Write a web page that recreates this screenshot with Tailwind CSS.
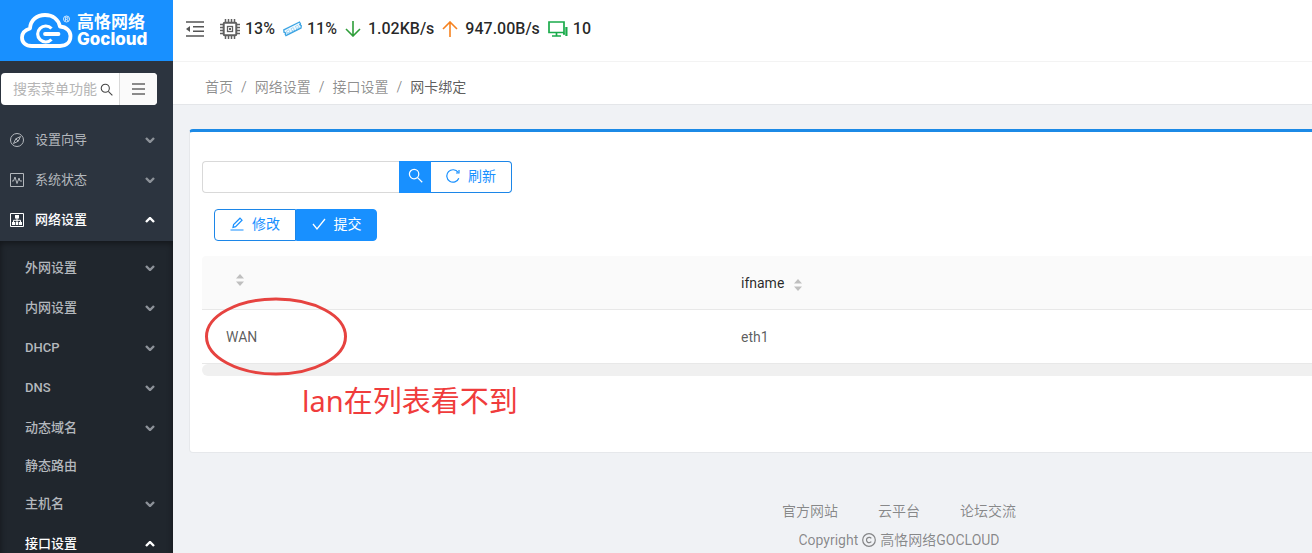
<!DOCTYPE html>
<html lang="zh-CN">
<head>
    <meta charset="UTF-8">
    <meta name="viewport" content="width=device-width, initial-scale=1.0">
    <title>网卡绑定 - 高恪网络</title>
    <script src="https://cdn.jsdelivr.net/npm/@tailwindcss/browser@4"></script>
</head>
<body class="h-screen overflow-hidden bg-[#f0f2f5] font-[Roboto,'Noto_Sans_CJK_SC',sans-serif] text-sm text-black/65">
    <!-- Shared icons -->
    <svg class="hidden">
        <symbol id="chevron" viewBox="0 0 10 6"><path d="M1 1l4 4 4-4" fill="none" stroke="currentColor" stroke-width="2.400"/></symbol>
        <symbol id="search" viewBox="0 0 16 16"><circle cx="6.5" cy="6.5" r="5" fill="none" stroke="currentColor" stroke-width="1.3"/><path d="M10.2 10.2l5 5" stroke="currentColor" stroke-width="1.3"/></symbol>
        <symbol id="sorter" viewBox="0 0 8 12"><path d="M4 0l4 4.500H0zM4 12l4-4.500H0z" fill="currentColor"/></symbol>
    </svg>

    <div class="flex h-full">
        <!-- Sidebar -->
        <aside class="relative z-10 flex w-[173px] shrink-0 flex-col overflow-hidden bg-[#2c343f] text-[13px] text-[#b4b8bd]">
            <a href="#" class="flex h-[61px] shrink-0 items-center gap-1 bg-[#1890ff] pl-5 text-white">
                <svg class="h-9 w-[53px]" viewBox="0 0 53 36" fill="none" stroke="currentColor">
                    <path d="M12 33C5.500 33 2 29.500 2 24.500c0-4.500 3-7.500 8-9C10.500 7 17 2 25 2c8 0 13.500 4.500 15 11.500 6.500.5 10.500 4.500 10.500 9.500 0 6-4 10-10.500 10z" stroke-width="3.800" stroke-linejoin="round"/>
                    <path d="M31.500 15.500a8 8 0 1 0 0 11" stroke-width="3.200"/>
                    <path d="M25 21h13.500" stroke-width="3.800" stroke-linecap="round"/>
                    <circle cx="46.500" cy="6" r="3" stroke-width=".8"/>
                    <path d="M45.500 8V4.300h1.300a1 1 0 0 1 0 2h-1.300M47 6.300l.9 1.700" stroke-width=".7"/>
                </svg>
                <span class="flex flex-col">
                    <span class="text-[17px] leading-[17px] font-bold">高恪网络</span>
                    <span class="font-[Inter,sans-serif] text-[17px] leading-[17px] font-extrabold">Gocloud</span>
                </span>
            </a>

            <form class="mx-px mt-3 flex h-8 w-[156px] shrink-0 overflow-hidden rounded-sm bg-white text-[#444]">
                <label class="flex flex-1 items-center pl-3">
                    <input type="text" aria-label="搜索菜单功能" placeholder="搜索菜单功能" class="w-[87px] text-sm outline-none placeholder:text-[#b5b5b5]">
                    <svg class="h-[13px] w-[13px]"><use href="#search"/></svg>
                </label>
                <button type="button" aria-label="菜单" class="flex w-[38px] items-center justify-center border-l border-[#d9d9d9] bg-[#fafafa]">
                    <svg class="h-3 w-[13px]" viewBox="0 0 13 12" stroke="#666" stroke-width="1.300"><path d="M0 1h13M0 6h13M0 11h13"/></svg>
                </button>
            </form>

            <nav class="mt-[15px] flex flex-col pb-px">
                <a href="#" class="flex h-10 items-center gap-[11px] pr-[18px] pl-[10px]">
                    <svg class="h-[14px] w-[14px]" viewBox="0 0 14 14" fill="none" stroke="currentColor"><circle cx="7" cy="7" r="6.500"/><path d="M10.500 3.500L8.200 8.200 3.500 10.500 5.800 5.800zM5.800 5.800l2.400 2.400"/></svg>
                    <span class="flex-1">设置向导</span>
                    <svg class="h-[6px] w-[10px] text-[#8d9299]"><use href="#chevron"/></svg>
                </a>
                <a href="#" class="flex h-10 items-center gap-[11px] pr-[18px] pl-[10px]">
                    <svg class="h-[14px] w-[14px]" viewBox="0 0 14 14" fill="none" stroke="currentColor"><path d="M.5.5h13v13H.5z"/><path d="M2 8h1.500l1.500-4 2 6.500L9 5l1 3h2"/></svg>
                    <span class="flex-1">系统状态</span>
                    <svg class="h-[6px] w-[10px] text-[#8d9299]"><use href="#chevron"/></svg>
                </a>
                <a href="#" class="flex h-10 items-center gap-[11px] pr-[18px] pl-[10px] font-medium text-white">
                    <svg class="h-[14px] w-[14px]" viewBox="0 0 14 14" fill="none" stroke="currentColor"><path d="M.5.5h13v13H.5z"/><path d="M5 2h4v3.500H5zM2 9h3v3H2zM5.700 9h2.600v3H5.700zM9 9h3v3H9z" fill="currentColor" stroke="none"/><path d="M7 5v4M3.500 9V7.300h7V9"/></svg>
                    <span class="flex-1">网络设置</span>
                    <svg class="h-[6px] w-[10px] rotate-180"><use href="#chevron"/></svg>
                </a>
            </nav>

            <!-- Submenu -->
            <nav class="flex flex-1 flex-col bg-[#20262d] pt-[7px] font-medium shadow-[inset_0_2px_6px_rgba(0,0,0,0.45)] [&>a]:shrink-0">
                <a href="#" class="flex h-10 items-center justify-between pr-[18px] pl-[25px]">外网设置<svg class="h-[6px] w-[10px] text-[#8d9299]"><use href="#chevron"/></svg></a>
                <a href="#" class="flex h-10 items-center justify-between pr-[18px] pl-[25px]">内网设置<svg class="h-[6px] w-[10px] text-[#8d9299]"><use href="#chevron"/></svg></a>
                <a href="#" class="flex h-10 items-center justify-between pr-[18px] pl-[25px]">DHCP<svg class="h-[6px] w-[10px] text-[#8d9299]"><use href="#chevron"/></svg></a>
                <a href="#" class="flex h-10 items-center justify-between pr-[18px] pl-[25px]">DNS<svg class="h-[6px] w-[10px] text-[#8d9299]"><use href="#chevron"/></svg></a>
                <a href="#" class="flex h-10 items-center justify-between pr-[18px] pl-[25px]">动态域名<svg class="h-[6px] w-[10px] text-[#8d9299]"><use href="#chevron"/></svg></a>
                <a href="#" class="flex h-9 items-center pl-[25px]">静态路由</a>
                <a href="#" class="flex h-10 items-center justify-between pr-[18px] pl-[25px]">主机名<svg class="h-[6px] w-[10px] text-[#8d9299]"><use href="#chevron"/></svg></a>
                <a href="#" class="flex h-10 items-center justify-between pr-[18px] pl-[25px] text-white">接口设置<svg class="h-[6px] w-[10px] rotate-180"><use href="#chevron"/></svg></a>
            </nav>
        </aside>

        <!-- Content, wider than small windows -->
        <div class="min-w-0 flex-1 overflow-hidden">
            <div class="min-w-[1452px]">
                <header class="flex h-[61px] items-center bg-white pb-[3px] pl-[13px] text-base font-medium text-black/85">
                    <button type="button" aria-label="收起菜单" class="mr-4">
                        <svg class="h-[18px] w-[18px]" viewBox="0 0 18 18" stroke="#555" stroke-width="1.600"><path d="M0 2h18M7 6.700h11M7 11.300h11M0 16h18"/><path d="M4 6v6L0 9z" fill="#555" stroke="none"/></svg>
                    </button>
                    <div class="flex items-center gap-2">
                        <span class="flex items-center gap-[5px]">
                            <svg class="h-5 w-5" viewBox="0 0 20 20" fill="none" stroke="#606060"><rect x="3.700" y="3.700" width="12.600" height="12.600" rx="1" stroke-width="2"/><rect x="7.500" y="7.500" width="5" height="5" stroke-width="1.300"/><path d="M9 10h2" stroke-width="2"/><path d="M5.500 0v3M8.500 0v3M11.500 0v3M14.500 0v3M5.500 17v3M8.500 17v3M11.500 17v3M14.500 17v3M0 5.500h3M0 8.500h3M0 11.500h3M0 14.500h3M17 5.500h3M17 8.500h3M17 11.500h3M17 14.500h3" stroke-width="1.500"/></svg>
                            13%
                        </span>
                        <span class="flex items-center gap-[5px]">
                            <svg class="h-5 w-[19px]" viewBox="0 0 19 20" fill="none" stroke="#3aa3e3"><path d="M.8 10.800L16.500 3l1 1.800-.7.8 1.500 1.200-.3 2.200L3 16.700l-.8-1.500.5-1.200-1.700-.8z" fill="#eef8fe" stroke-width="1.300"/><path d="M3.500 12l2.300-1.200 1 2-2.300 1.200zM8 9.800l2.200-1.200 1 2L9 11.800zM12.500 7.500l2.200-1.200 1 2-2.200 1.200z" fill="#fff" stroke-width=".4"/><path d="M4 15.300l13-6.600" stroke-width=".8" stroke-dasharray="1 1"/></svg>
                            11%
                        </span>
                        <span class="flex items-center gap-[7px]">
                            <svg class="h-4 w-4" viewBox="0 0 16 16" fill="none" stroke="#2f9e3a" stroke-width="1.600"><path d="M8 0v15M1 8l7 7 7-7"/></svg>
                            1.02KB/s
                        </span>
                        <span class="flex items-center gap-[7px]">
                            <svg class="h-4 w-4" viewBox="0 0 16 16" fill="none" stroke="#f58220" stroke-width="1.600"><path d="M8 16V1M1 8l7-7 7 7"/></svg>
                            947.00B/s
                        </span>
                        <span class="flex items-center gap-[5px]">
                            <svg class="h-4 w-5" viewBox="0 0 20 16" fill="none" stroke="#1aab4b" stroke-width="1.700"><path d="M1 1h15v10.500H1zM8.500 12v3M4 15h9M15 13h2"/><path d="M17.300 6h2.200v9h-2.200z" fill="#1aab4b" stroke="none"/></svg>
                            10
                        </span>
                    </div>
                </header>

                <nav aria-label="breadcrumb" class="flex h-11 items-center gap-2 border-y border-t-[#f3f3f3] border-b-[#e4e6e9] bg-white pt-2 pl-8 text-black/45">
                    <a href="#">首页</a><span>/</span>
                    <a href="#">网络设置</a><span>/</span>
                    <a href="#">接口设置</a><span>/</span>
                    <span class="text-black/65">网卡绑定</span>
                </nav>

                <main class="relative mx-4 mt-6 rounded-sm border border-t-3 border-[#e6e8eb] border-t-[#1c8ae6] bg-white px-3 pt-[29px] pb-[76px]">
                    <form class="flex">
                        <input type="text" aria-label="搜索" class="h-8 w-[197px] rounded-l-sm border border-r-0 border-[#d9d9d9] px-3 outline-none">
                        <button type="button" aria-label="搜索" class="flex h-8 w-8 items-center justify-center bg-[#1890ff] pb-[3px] text-white">
                            <svg class="h-[15px] w-[15px]"><use href="#search"/></svg>
                        </button>
                        <button type="button" class="flex h-8 w-[81px] items-center justify-center gap-2 rounded-r-sm border border-l-0 border-[#1c86e8] pb-[3px] text-[#1890ff]">
                            <svg class="h-[14px] w-[14px]" viewBox="0 0 14 14" fill="none" stroke="currentColor" stroke-width="1.200"><path d="M12.800 9.200a6.200 6.200 0 1 1-.7-5.800"/><path d="M13 1v3h-3"/></svg>
                            刷新
                        </button>
                    </form>

                    <div class="mt-4 ml-3 flex">
                        <button type="button" class="flex h-8 w-[82px] items-center justify-center gap-2 rounded-l-sm border border-[#1c86e8] pb-[3px] text-[#1890ff]">
                            <svg class="h-[14px] w-[14px]" viewBox="0 0 14 14" fill="none" stroke="currentColor" stroke-width="1.200"><path d="M.5 13h13M3 10.300l.6-2.800L10 1.200l2 2-6.400 6.400z"/></svg>
                            修改
                        </button>
                        <button type="button" class="flex h-8 w-[81px] items-center justify-center gap-2 rounded-r-sm border border-[#1890ff] bg-[#1890ff] pb-[3px] text-white">
                            <svg class="h-[14px] w-[14px]" viewBox="0 0 14 14" fill="none" stroke="currentColor" stroke-width="1.300"><path d="M1 7l4 5 8-10"/></svg>
                            提交
                        </button>
                    </div>

                    <table class="mt-[15px] w-full table-fixed border-separate border-spacing-0 text-left">
                        <thead class="text-black/85">
                            <tr class="h-[54px]">
                                <th class="w-[515px] rounded-tl-sm border-b border-[#e8e8e8] bg-[#fafafa] pb-[6px] pl-[34px] font-normal"><svg class="h-3 w-2 text-[#bfbfbf]"><use href="#sorter"/></svg></th>
                                <th class="border-b border-[#e8e8e8] bg-[#fafafa] pl-6 font-normal"><span class="flex items-center gap-[10px]">ifname <svg class="mt-1 h-3 w-2 text-[#bfbfbf]"><use href="#sorter"/></svg></span></th>
                            </tr>
                        </thead>
                        <tbody>
                            <tr class="h-[54px]">
                                <td class="border-b border-[#e8e8e8] pl-6">WAN</td>
                                <td class="border-b border-[#e8e8e8] pl-6">eth1</td>
                            </tr>
                        </tbody>
                    </table>
                    <div class="h-3 rounded-l-full bg-[#f0f0f0]"></div>

                    <!-- Red annotation over the table -->
                    <svg class="absolute top-[165px] left-[15px] h-[80px] w-[143px]" viewBox="0 0 143 80" fill="none" stroke="#e64340" stroke-width="3"><ellipse cx="71" cy="39.500" rx="69.500" ry="37.500"/></svg>
                    <p class="absolute top-[248px] left-[112px] font-['Noto_Sans','Noto_Sans_CJK_SC',sans-serif] text-[29px] leading-[42px] text-[#f03c3c]">lan在列表看不到</p>
                </main>

                <footer class="mt-12 flex flex-col items-center gap-[9px] text-black/45">
                    <div class="flex gap-10">
                        <a href="#">官方网站</a>
                        <a href="#">云平台</a>
                        <a href="#">论坛交流</a>
                    </div>
                    <p class="flex items-center gap-1">
                        Copyright
                        <svg class="h-[14px] w-[14px]" viewBox="0 0 14 14" fill="none" stroke="currentColor" stroke-width="1.200"><circle cx="7" cy="7" r="6.300"/><path d="M9.300 5.300a2.700 2.700 0 1 0 0 3.400"/></svg>
                        高恪网络GOCLOUD
                    </p>
                </footer>
            </div>
        </div>
    </div>
</body>
</html>
